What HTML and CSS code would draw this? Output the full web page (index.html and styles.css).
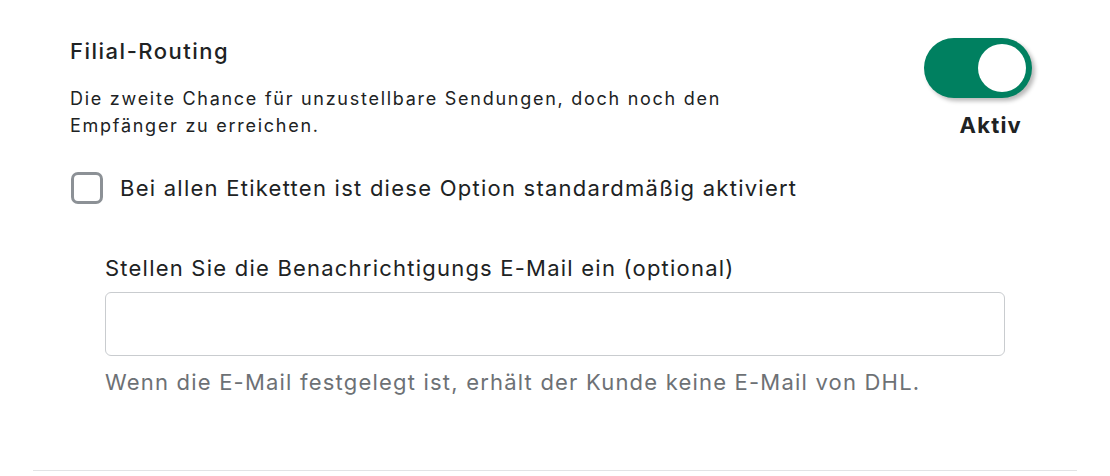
FILE: index.html
```html
<!DOCTYPE html>
<html lang="de">
<head>
<meta charset="utf-8">
<link rel="stylesheet" href="styles.css">
</head>
<body>
<div class="section">
  <div class="head">
    <div class="text">
      <h2 class="title">Filial-Routing</h2>
      <p class="desc">Die zweite Chance für unzustellbare Sendungen, doch noch den Empfänger zu erreichen.</p>
    </div>
    <div class="toggle-wrap">
      <div class="toggle"><span class="knob"></span></div>
      <div class="state">Aktiv</div>
    </div>
  </div>
  <label class="check">
    <span class="box"></span>
    <span class="check-label">Bei allen Etiketten ist diese Option standardmäßig aktiviert</span>
  </label>
  <div class="field">
    <div class="field-label">Stellen Sie die Benachrichtigungs E-Mail ein (optional)</div>
    <div class="input"></div>
    <div class="help">Wenn die E-Mail festgelegt ist, erhält der Kunde keine E-Mail von DHL.</div>
  </div>
</div>
<div class="divider"></div>
</body>
</html>
```

FILE: styles.css
```css
html, body { margin: 0; padding: 0; background: #fff; }
body {
  font-family: Inter, "Noto Sans", sans-serif;
  color: #202223;
  width: 1110px;
  height: 476px;
  overflow: hidden;
}
.section {
  padding: 37px 78px 0 70px;
  height: 470px;
  box-sizing: border-box;
}
.head {
  display: flex;
  justify-content: space-between;
  align-items: flex-start;
}
.title {
  margin: 0;
  font-size: 22px;
  font-weight: 550;
  line-height: 28px;
  letter-spacing: 1.5px;
}
.desc {
  margin: 20px 0 0;
  font-size: 18px;
  line-height: 27px;
  letter-spacing: 1.73px;
  width: 690px;
}
.toggle-wrap {
  display: flex;
  flex-direction: column;
  align-items: flex-end;
  padding-top: 1px;
}
.toggle {
  width: 108px;
  height: 60px;
  border-radius: 30px;
  background: #008060;
  box-shadow: 3px 3px 4px rgba(0,0,0,0.28);
  display: flex;
  justify-content: flex-end;
  align-items: center;
  padding: 0 6px;
  box-sizing: border-box;
}
.knob {
  width: 48px;
  height: 48px;
  border-radius: 50%;
  background: #fff;
}
.state {
  margin-top: 13px;
  margin-right: 10px;
  font-size: 22px;
  font-weight: 700;
  line-height: 28px;
  letter-spacing: 1.2px;
}
.check {
  display: flex;
  align-items: center;
  gap: 17px;
  margin-top: 33px;
  margin-left: 1px;
}
.box {
  width: 32px;
  height: 32px;
  flex: none;
  box-sizing: border-box;
  border: 3px solid #8c9196;
  border-radius: 7px;
}
.check-label {
  font-size: 22px;
  line-height: 28px;
  letter-spacing: 1.25px;
}
.field {
  margin: 50px 0 0 35px;
  width: 900px;
}
.field-label {
  font-size: 22px;
  line-height: 28px;
  letter-spacing: 1.22px;
}
.input {
  margin-top: 10px;
  height: 64px;
  box-sizing: border-box;
  border: 1px solid #c9cccf;
  border-radius: 6px;
}
.help {
  margin-top: 12px;
  font-size: 22px;
  line-height: 28px;
  letter-spacing: 1.2px;
  color: #6d7175;
}
.divider {
  margin: 0 33px;
  height: 1px;
  background: #e1e3e5;
}
```
